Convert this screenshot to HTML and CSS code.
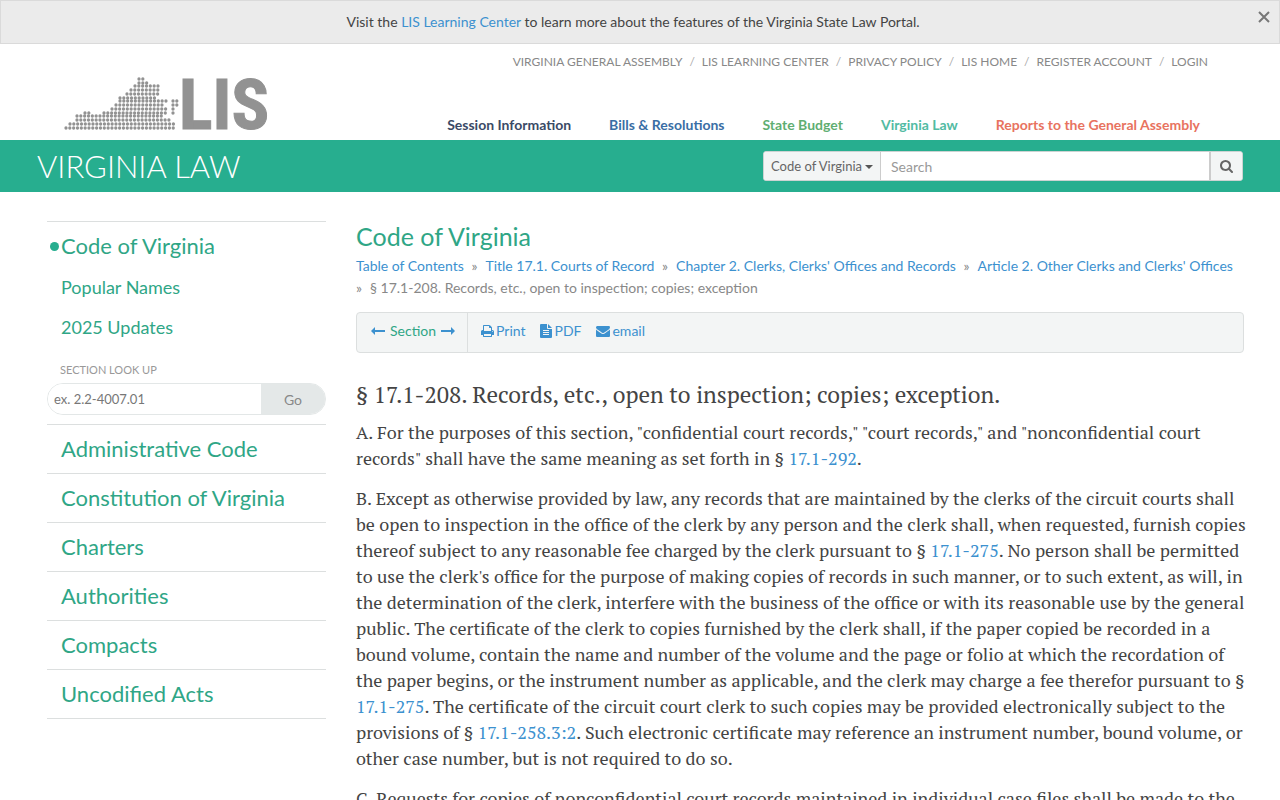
FILE: index.html
```html
<!DOCTYPE html>
<html lang="en">

<head>
    <meta charset="UTF-8">
    <meta name="viewport" content="width=device-width, initial-scale=1.0">
    <title>§ 17.1-208. Records, etc., open to inspection; copies; exception</title>
    <link rel="stylesheet" href="styles.css">
</head>

<body>

    <div class="alert">
        <p>Visit the <a href="#">LIS Learning Center</a> to learn more about the features of the Virginia State Law Portal.</p>
        <button type="button" class="close" aria-label="Close">
            <svg viewBox="0 0 12 12" width="12" height="12"><path d="M1 1l10 10M11 1L1 11" stroke="currentColor" stroke-width="2"/></svg>
        </button>
    </div>

    <header class="header">
        <a href="#" class="logo" aria-label="LIS">
            <svg viewBox="0 0 204 56" width="204" height="56">
                <!-- dotted state map, one line per row -->
                <g class="dots">
                    <path d="M75 3h5"/>
                    <path d="M75 7h9"/>
                    <path d="M71 10h24"/>
                    <path d="M67 14h28"/>
                    <path d="M63 18h32"/>
                    <path d="M56 22h35"/>
                    <path d="M56 25h47M109 25h5"/>
                    <path d="M52 29h47M109 29h5"/>
                    <path d="M48 33h55M109 33h1"/>
                    <path d="M21 37h5M40 37h63M109 37h1"/>
                    <path d="M13 40h86"/>
                    <path d="M13 44h93"/>
                    <path d="M6 48h104"/>
                    <path d="M2 52h108"/>
                </g>
                <text x="115" y="53" class="logo-text">LIS</text>
            </svg>
        </a>
        <div class="header-nav">
            <nav class="top-links">
                <a href="#">Virginia General Assembly</a>
                <a href="#">LIS Learning Center</a>
                <a href="#">Privacy Policy</a>
                <a href="#">LIS Home</a>
                <a href="#">Register Account</a>
                <a href="#">Login</a>
            </nav>
            <nav class="main-links">
                <a href="#" class="session">Session Information</a>
                <a href="#" class="bills">Bills &amp; Resolutions</a>
                <a href="#" class="budget">State Budget</a>
                <a href="#" class="law">Virginia Law</a>
                <a href="#" class="reports">Reports to the General Assembly</a>
            </nav>
        </div>
    </header>

    <div class="banner">
        <h1>VIRGINIA LAW</h1>
        <form class="search">
            <div class="scope">
                <select name="scope" aria-label="Search in">
                    <option>Code of Virginia</option>
                </select>
                <svg class="caret" viewBox="0 0 8 4" width="8" height="4"><path d="M0 0h8L4 4z"/></svg>
            </div>
            <input type="text" name="search" placeholder="Search" aria-label="Search">
            <button type="submit" aria-label="Search">
                <svg class="icon" viewBox="0 0 1664 1792" width="13" height="14"><path d="M1152 832q0-185-131.5-316.5t-316.5-131.5-316.5 131.5-131.5 316.5 131.5 316.5 316.5 131.5 316.5-131.5 131.5-316.5zm512 832q0 52-38 90t-90 38q-54 0-90-38l-343-342q-179 124-399 124-143 0-273.5-55.5t-225-150-150-225-55.5-273.5 55.5-273.5 150-225 225-150 273.5-55.5 273.5 55.5 225 150 150 225 55.5 273.5q0 220-124 399l343 343q37 37 37 90z"/></svg>
            </button>
        </form>
    </div>

    <div class="cont">

        <aside class="sidebar">
            <div class="group">
                <a href="#" class="title active">Code of Virginia</a>
                <a href="#" class="sub">Popular Names</a>
                <a href="#" class="sub">2025 Updates</a>
                <form class="lookup">
                    <label for="section">SECTION LOOK UP</label>
                    <div class="lookup-row">
                        <input type="text" id="section" name="section" placeholder="ex. 2.2-4007.01">
                        <button type="submit">Go</button>
                    </div>
                </form>
            </div>
            <div class="group"><a href="#" class="title">Administrative Code</a></div>
            <div class="group"><a href="#" class="title">Constitution of Virginia</a></div>
            <div class="group"><a href="#" class="title">Charters</a></div>
            <div class="group"><a href="#" class="title">Authorities</a></div>
            <div class="group"><a href="#" class="title">Compacts</a></div>
            <div class="group"><a href="#" class="title">Uncodified Acts</a></div>
        </aside>

        <main class="content">
            <h2>Code of Virginia</h2>
            <ul class="breadcrumb">
                <li><a href="#">Table of Contents</a></li>
                <li><a href="#">Title 17.1. Courts of Record</a></li>
                <li><a href="#">Chapter 2. Clerks, Clerks' Offices and Records</a></li>
                <li><a href="#">Article 2. Other Clerks and Clerks' Offices</a></li>
                <li>§ 17.1-208. Records, etc., open to inspection; copies; exception</li>
            </ul>

            <div class="toolbar">
                <div class="pager">
                    <a href="#" aria-label="Previous section"><svg class="icon" viewBox="0 0 14 14" width="14" height="14"><path d="M0 7l4-4v3h10v2H4v3z"/></svg></a>
                    <span>Section</span>
                    <a href="#" aria-label="Next section"><svg class="icon" viewBox="0 0 14 14" width="14" height="14"><path d="M14 7l-4-4v3H0v2h10v3z"/></svg></a>
                </div>
                <div class="tools">
                    <a href="#">
                        <svg class="icon" viewBox="0 0 1664 1792" width="13" height="14"><path d="M384 1536h896v-256h-896v256zm0-640h896v-384h-160q-40 0-68-28t-28-68v-160h-640v640zm1152 64q0-26-19-45t-45-19-45 19-19 45 19 45 45 19 45-19 19-45zm128 0v416q0 13-9.5 22.5t-22.5 9.5h-224v160q0 40-28 68t-68 28h-960q-40 0-68-28t-28-68v-160h-224q-13 0-22.5-9.5t-9.5-22.5v-416q0-79 56.5-135.5t135.5-56.5h64v-544q0-40 28-68t68-28h672q40 0 88 20t76 48l152 152q28 28 48 76t20 88v256h64q79 0 135.5 56.5t56.5 135.5z"/></svg>
                        Print
                    </a>
                    <a href="#">
                        <svg class="icon" viewBox="0 0 12 14" width="12" height="14"><path fill-rule="evenodd" d="M1 0h6v4q0 1 1 1h4v8q0 1-1 1H1q-1 0-1-1V1q0-1 1-1zM8 0l4 4H8zM3 6v1h6V6zm0 2v1h6V8zm0 2v1h6v-1z"/></svg>
                        PDF
                    </a>
                    <a href="#">
                        <svg class="icon" viewBox="0 0 1792 1792" width="14" height="14"><path d="M1792 710v794q0 66-47 113t-113 47h-1472q-66 0-113-47t-47-113v-794q44 49 101 87 362 246 497 345 57 42 92.5 65.5t94.5 48 110 24.5h2q51 0 110-24.5t94.5-48 92.5-65.5q170-123 498-345 57-39 100-87zm0-294q0 79-49 151t-122 123q-376 261-468 325-10 7-42.5 31t-54 38.5-52 32.5-57.5 27-50 9h-2q-23 0-50-9t-57.5-27-52-32.5-54-38.5-42.5-31q-91-64-262-182.5t-205-142.5q-62-42-117-115.5t-55-136.5q0-78 41.5-130t118.5-52h1472q65 0 112.5 47t47.5 113z"/></svg>
                        email
                    </a>
                </div>
            </div>

            <article class="statute">
                <h3>§ 17.1-208. Records, etc., open to inspection; copies; exception.</h3>
                <p>A. For the purposes of this section, "confidential court records," "court records," and "nonconfidential court records" shall have the same meaning as set forth in § <a href="#">17.1-292</a>.</p>
                <p>B. Except as otherwise provided by law, any records that are maintained by the clerks of the circuit courts shall be open to inspection in the office of the clerk by any person and the clerk shall, when requested, furnish copies thereof subject to any reasonable fee charged by the clerk pursuant to § <a href="#">17.1-275</a>. No person shall be permitted to use the clerk's office for the purpose of making copies of records in such manner, or to such extent, as will, in the determination of the clerk, interfere with the business of the office or with its reasonable use by the general public. The certificate of the clerk to copies furnished by the clerk shall, if the paper copied be recorded in a bound volume, contain the name and number of the volume and the page or folio at which the recordation of the paper begins, or the instrument number as applicable, and the clerk may charge a fee therefor pursuant to § <a href="#">17.1-275</a>. The certificate of the circuit court clerk to such copies may be provided electronically subject to the provisions of § <a href="#">17.1-258.3:2</a>. Such electronic certificate may reference an instrument number, bound volume, or other case number, but is not required to do so.</p>
                <p>C. Requests for copies of nonconfidential court records maintained in individual case files shall be made to the</p>
            </article>
        </main>

    </div>

</body>

</html>
```
FILE: styles.css
```css
:root {
    --green: #27ae8f;
    --green-text: #2fa686;
    --blue: #3c91cf;
    --text: #444;
    --line: #dcdfdf;
}

* {
    margin: 0;
    padding: 0;
    box-sizing: border-box;
}

body {
    font-family: Lato, sans-serif;
    font-size: 14px;
    line-height: 22px;
    color: var(--text);
    background-color: #fff;
}

a {
    color: var(--blue);
    text-decoration: none;
}

input, button, select {
    font-family: inherit;
    font-size: 14px;
    color: #666;
}

.icon {
    fill: currentColor;
    flex: none;
}

.alert {
    position: relative;
    padding: 10px 48px;
    background-color: #ebebeb;
    border: 1px solid #dadada;
    text-align: center;
}

.alert p {
    padding-right: 14px;
}

.close {
    position: absolute;
    top: 10px;
    right: 9px;
    display: flex;
    background: none;
    border: none;
    color: #777;
}

.header {
    display: flex;
    justify-content: space-between;
    height: 96px;
    padding: 0 72px 0 64px;
}

.logo {
    padding-top: 32px;
}

.logo svg {
    overflow: visible;
}

.dots {
    fill: none;
    stroke: #929292;
    stroke-width: 3.3;
    stroke-linecap: round;
    stroke-dasharray: 0 3.83;
}

.logo-text {
    font-family: "Roboto Condensed", "Liberation Sans", sans-serif;
    font-size: 70px;
    font-weight: bold;
    fill: #929292;
    stroke: #929292;
    stroke-width: 1;
}

.header-nav {
    display: flex;
    flex-direction: column;
    justify-content: space-between;
    padding: 7px 0 4px;
}

.top-links {
    display: flex;
    justify-content: flex-end;
    font-size: 12px;
    text-transform: uppercase;
}

.top-links a {
    color: #888;
}

.top-links a + a::before {
    content: "/";
    padding: 0 7px;
    color: #aaa;
}

.main-links {
    display: flex;
    justify-content: flex-end;
    gap: 38px;
    padding-right: 8px;
    font-weight: bold;
}

.session { color: #3a4a66; }
.bills { color: #3a6ea5; }
.budget { color: #5fae72; }
.law { color: #52bba3; }
.reports { color: #e8735f; }

.banner {
    display: flex;
    justify-content: space-between;
    align-items: center;
    height: 52px;
    padding: 0 37px;
    background-color: var(--green);
}

.banner h1 {
    font-size: 31px;
    font-weight: 300;
    line-height: 52px;
    color: #fff;
}

.search {
    display: flex;
    width: 480px;
    height: 30px;
    border: 1px solid #ccd3d2;
    border-radius: 3px;
    background-color: #fff;
    overflow: hidden;
}

.scope {
    position: relative;
    display: flex;
    background-color: #f3f5f5;
    border-right: 1px solid #ccc;
}

.scope select {
    appearance: none;
    width: 116px;
    padding: 0 14px 0 7px;
    border: none;
    background: none;
    font-size: 13px;
}

.caret {
    position: absolute;
    top: 13px;
    right: 7px;
    fill: #555;
    pointer-events: none;
}

.search input {
    flex: 1;
    padding: 0 10px;
    border: none;
}

.search input::placeholder {
    color: #999;
}

.search button {
    display: flex;
    align-items: center;
    justify-content: center;
    width: 33px;
    border: none;
    border-left: 2px solid #ccc;
    background-color: #f3f5f5;
}

.cont {
    display: flex;
    gap: 30px;
    padding: 29px 36px 0 47px;
}

.sidebar {
    flex: none;
    width: 279px;
    border-top: 1px solid var(--line);
}

.group {
    padding-bottom: 9px;
    border-bottom: 1px solid var(--line);
}

.group a {
    display: block;
    padding-left: 14px;
    color: var(--green-text);
}

.group .title {
    padding-top: 9px;
    font-size: 22px;
    line-height: 30px;
}

.group .active {
    display: flex;
    align-items: center;
    padding-left: 3px;
}

.active::before {
    content: "";
    width: 9px;
    height: 9px;
    margin-right: 2px;
    border-radius: 50%;
    background-color: var(--green);
}

.group .sub {
    padding-top: 10px;
    font-size: 18px;
    line-height: 30px;
}

.group .title + .sub {
    padding-top: 11px;
}

.lookup label {
    display: block;
    padding: 17px 0 2px 13px;
    font-size: 11px;
    color: #999;
}

.lookup-row {
    display: flex;
    height: 32px;
    border: 1px solid #e3e7e7;
    border-radius: 16px;
    overflow: hidden;
}

.lookup-row input {
    flex: 1;
    min-width: 0;
    padding-left: 6px;
    border: none;
    font-size: 13px;
}

.lookup-row input::placeholder {
    color: #777;
}

.lookup-row button {
    width: 64px;
    border: none;
    background-color: #e4e8e8;
    color: #888;
}

.content {
    flex: 1;
    min-width: 0;
}

.content h2 {
    font-size: 25px;
    font-weight: normal;
    line-height: 30px;
    color: var(--green-text);
}

.breadcrumb {
    padding-top: 4px;
    margin-right: -4px;
    list-style: none;
    color: #888;
}

.breadcrumb li {
    display: inline;
}

.breadcrumb li + li::before {
    content: "»";
    padding: 0 8px 0 4px;
}

.breadcrumb li:last-child::before {
    padding-left: 0;
}

.toolbar {
    display: flex;
    height: 41px;
    margin-top: 13px;
    border: 1px solid var(--line);
    border-radius: 4px;
    background-color: #f3f5f5;
    line-height: 36px;
}

.pager, .pager a, .tools, .tools a {
    display: flex;
    align-items: center;
}

.pager, .tools {
    padding-bottom: 3px;
}

.pager {
    gap: 5px;
    padding-left: 14px;
    padding-right: 12px;
    border-right: 1px solid var(--line);
    color: var(--green-text);
}

.tools {
    gap: 15px;
    padding-left: 13px;
}

.tools a {
    gap: 2px;
}

.statute {
    padding-top: 26px;
    margin-right: -4px;
    font-family: "PT Serif", "Liberation Serif", serif;
    font-size: 18px;
    line-height: 26px;
}

.statute h3 {
    margin-bottom: 8px;
    font-size: 23px;
    font-weight: normal;
    line-height: 32px;
}

.statute p {
    margin-bottom: 14px;
}
```
